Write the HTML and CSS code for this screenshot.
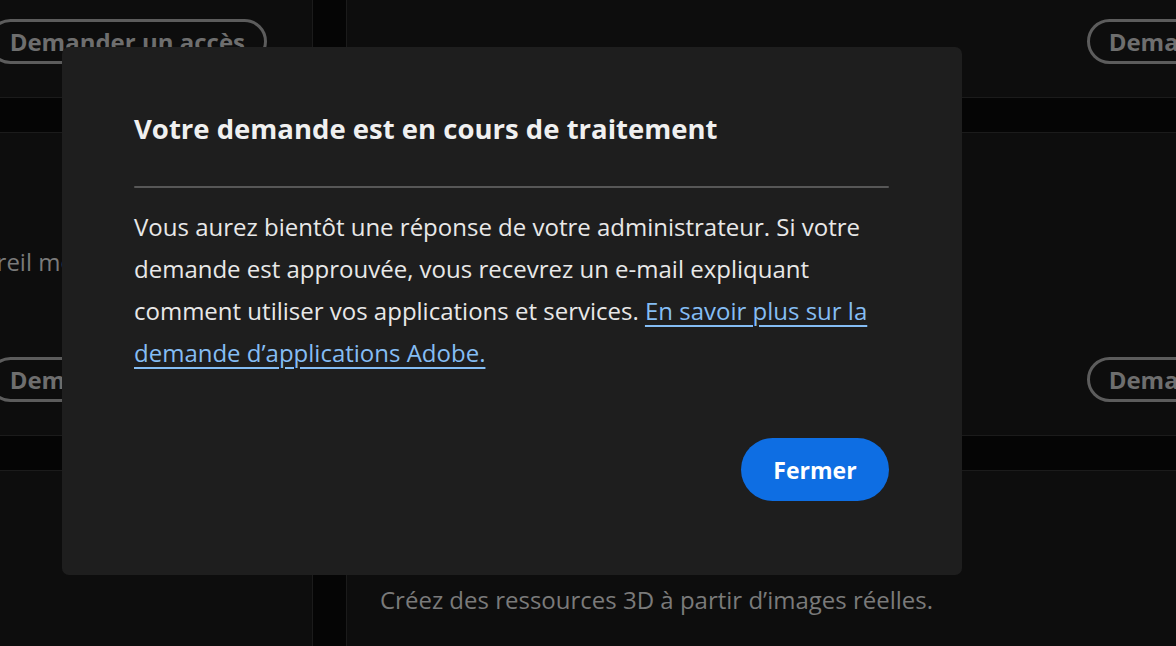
FILE: index.html
```html
<!DOCTYPE html>
<html lang="fr">
<head>
<meta charset="utf-8">
<title>Demande en cours</title>
<link rel="stylesheet" href="styles.css">
</head>
<body>
  <main class="board">
    <section class="card">
      <p class="desc">Modifiez vos vidéos.</p>
      <div class="actions"><button class="ghost">Demander un accès</button></div>
    </section>
    <section class="card">
      <p class="desc">Concevez des mises en page.</p>
      <div class="actions"><button class="ghost">Demander un accès</button></div>
    </section>
    <section class="card">
      <p class="desc">Dessinez sur son appareil mobile.</p>
      <div class="actions"><button class="ghost">Demander un accès</button></div>
    </section>
    <section class="card">
      <p class="desc">Concevez des expériences 3D.</p>
      <div class="actions"><button class="ghost">Demander un accès</button></div>
    </section>
    <section class="card">
      <p class="desc">Retouchez vos photos.</p>
      <div class="actions"><button class="ghost">Demander un accès</button></div>
    </section>
    <section class="card">
      <p class="desc">Créez des ressources 3D à partir d’images réelles.</p>
      <div class="actions"><button class="ghost">Demander un accès</button></div>
    </section>
  </main>

  <div class="dialog" role="dialog" aria-labelledby="dlg-title">
    <h2 class="dialog-title" id="dlg-title">Votre demande est en cours de traitement</h2>
    <hr class="divider">
    <p class="dialog-body">Vous aurez bientôt une réponse de votre administrateur. Si votre demande est approuvée, vous recevrez un e-mail expliquant comment utiliser vos applications et services. <a class="link" href="#">En savoir plus sur la demande d’applications Adobe.</a></p>
    <div class="dialog-footer"><button class="cta">Fermer</button></div>
  </div>
</body>
</html>
```

FILE: styles.css
```css
* { box-sizing: border-box; }

html, body {
  margin: 0;
  padding: 0;
}

body {
  position: relative;
  width: 1176px;
  height: 646px;
  overflow: hidden;
  background: #050505;
  font-family: "Open Sans", "Noto Sans", sans-serif;
}

.board {
  display: grid;
  grid-template-columns: 601px 1066px;
  grid-auto-rows: 304px;
  column-gap: 33px;
  row-gap: 34px;
  margin: -206px 0 0 -288px;
}

.card {
  display: flex;
  flex-direction: column;
  background: #0d0d0d;
  border: 1px solid #1b1b1b;
  padding: 115px 45px 33px 33px;
}

.desc {
  margin: 0;
  font-size: 24px;
  line-height: 28px;
  color: #7a7a7a;
  white-space: nowrap;
}

.actions {
  margin-top: auto;
  display: flex;
  justify-content: flex-end;
}

.ghost {
  height: 45px;
  padding: 0 19px;
  border: 3px solid #5c5c5c;
  border-radius: 23px;
  background: transparent;
  color: #6e6e6e;
  font-family: inherit;
  font-size: 24px;
  font-weight: 700;
  line-height: 1;
  white-space: nowrap;
}

.dialog {
  position: absolute;
  left: 62px;
  top: 47px;
  width: 900px;
  height: 528px;
  display: flex;
  flex-direction: column;
  padding: 64px 73px 74px 72px;
  background: #1e1e1e;
  border-radius: 7px;
}

.dialog-title {
  margin: 0;
  font-size: 27.5px;
  line-height: 36px;
  font-weight: 700;
  color: #f0f0f0;
}

.divider {
  margin: 39px 0 0;
  height: 2px;
  border: 0;
  border-radius: 1px;
  background: #575757;
}

.dialog-body {
  margin: 18px 0 0;
  font-size: 24px;
  line-height: 42px;
  color: #e8e8e8;
}

.link {
  color: #85bdf4;
  text-decoration: underline;
  text-decoration-thickness: 2px;
  text-underline-offset: 5px;
}

.dialog-footer {
  margin-top: auto;
  display: flex;
  justify-content: flex-end;
}

.cta {
  width: 148px;
  height: 63px;
  border: 0;
  border-radius: 32px;
  background: #0e6ee3;
  color: #ffffff;
  font-family: inherit;
  font-size: 23px;
  font-weight: 700;
}
```
